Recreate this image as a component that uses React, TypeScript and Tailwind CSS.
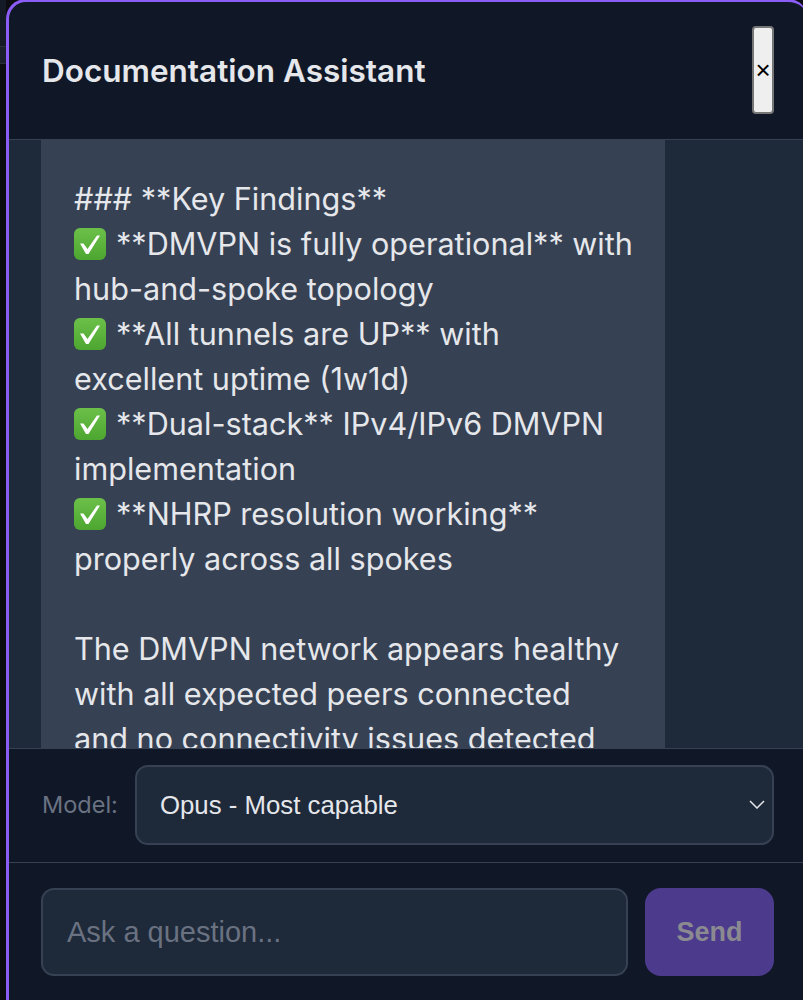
const lines: { text: string; check?: boolean }[] = [
  { text: "### **Key Findings**" },
  { text: "**DMVPN is fully operational** with", check: true },
  { text: "hub-and-spoke topology" },
  { text: "**All tunnels are UP** with", check: true },
  { text: "excellent uptime (1w1d)" },
  { text: "**Dual-stack** IPv4/IPv6 DMVPN", check: true },
  { text: "implementation" },
  { text: "**NHRP resolution working**", check: true },
  { text: "properly across all spokes" },
  { text: "\u00a0" },
  { text: "The DMVPN network appears healthy" },
  { text: "with all expected peers connected" },
  { text: "and no connectivity issues detected" },
];

function CheckEmoji() {
  return (
    <svg viewBox="0 0 32 32" className="mr-[10px] inline-block h-[32px] w-[32px] align-[-5px]">
      <defs>
        <linearGradient id="chk" x1="0" y1="0" x2="0" y2="1">
          <stop offset="0" stopColor="#6cc04a" />
          <stop offset="1" stopColor="#4ca62f" />
        </linearGradient>
      </defs>
      <rect x="0" y="0" width="32" height="32" rx="6" fill="url(#chk)" />
      <path d="M6 15.5h3.5l4 5.5L23 7.5h3L14.5 26h-2.5z" fill="#fff" />
    </svg>
  );
}

export default function App() {
  return (
    <div className="relative h-[1000px] w-[803px] overflow-hidden bg-[#0b0d13]">
      <div className="absolute top-0 left-0 h-[46px] w-[6px] bg-[#141b26]" />
      <div className="absolute top-[46px] left-0 h-[18px] w-[6px] border-y border-[#2a3039] bg-[#1a212c]" />
      <div className="relative -mt-px ml-[6px] flex h-[1001px] w-[802px] flex-col overflow-hidden rounded-t-[20px] border-t-[3px] border-l-[3px] border-[#8b5cf6] bg-[#101828] font-['Inter',sans-serif]">
        <div className="flex h-[138px] shrink-0 items-center justify-between border-b border-[#364153] pr-[34px] pl-[33px]">
          <h2 className="text-[31.5px] leading-[36px] font-semibold text-[#e5e7eb]">Documentation Assistant</h2>
          <button
            type="button"
            className="mb-[2px] flex h-[88px] w-[22px] items-center justify-center rounded-[4px] border-2 border-[#767676] bg-[#efefef] font-['Liberation_Sans',sans-serif] text-[26px] leading-none text-black"
          >
            ×
          </button>
        </div>
        <div className="h-[608px] shrink-0 overflow-hidden bg-[#1e2939] pl-[32px]">
          <div className="h-[608px] w-[624px] bg-[#364153] pt-[36px] pl-[33px] text-[30.6px] leading-[45px] text-[#e5e7eb]">
            {lines.map((l, i) => (
              <div key={i} className="whitespace-nowrap">
                {l.check && <CheckEmoji />}
                {l.text}
              </div>
            ))}
          </div>
        </div>
        <div className="flex h-[115px] shrink-0 items-center gap-[17px] border-t border-b border-[#364153] pr-[34px] pb-[2px] pl-[33px]">
          <span className="text-[23.5px] text-[#6a7282]">Model:</span>
          <div className="flex h-[80px] flex-1 items-center justify-between rounded-[13px] border-2 border-[#364153] bg-[#1e2939] pr-[7px] pl-[23px] font-['Liberation_Sans',sans-serif] text-[25.8px] text-[#e5e7eb]">
            <span className="pt-px">Opus - Most capable</span>
            <svg viewBox="0 0 16 9" className="h-[9px] w-[16px]" fill="none" stroke="#e5e7eb" strokeWidth="1.5">
              <path d="M1 1l7 7 7-7" />
            </svg>
          </div>
        </div>
        <div className="flex flex-1 items-start gap-[17px] pt-[25px] pr-[34px] pl-[32px]">
          <div className="flex h-[88px] flex-1 items-center rounded-[13px] border-2 border-[#364153] bg-[#1e2939] pt-px pl-[24px] font-['Liberation_Sans',sans-serif] text-[29px] text-[#6a7282]">
            Ask a question...
          </div>
          <button
            type="button"
            className="h-[88px] w-[129px] rounded-[16px] bg-[#4c3a8c] pt-px font-['Liberation_Sans',sans-serif] text-[27px] font-bold text-[#8a8a90]"
          >
            Send
          </button>
        </div>
      </div>
    </div>
  );
}
